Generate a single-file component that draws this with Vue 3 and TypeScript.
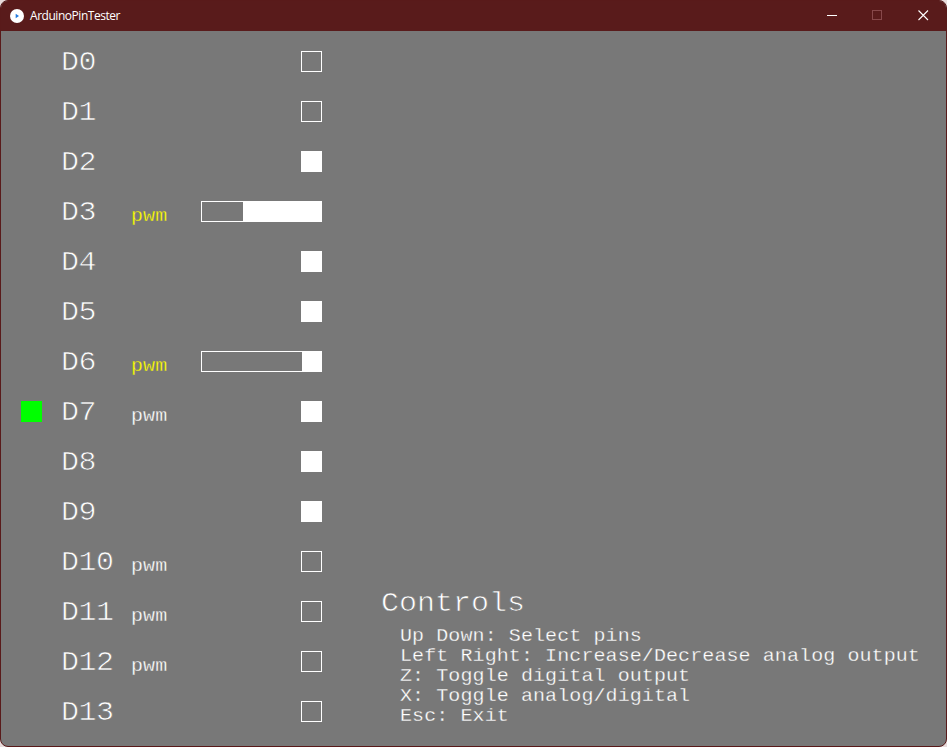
<script setup lang="ts">
interface Pin {
  name: string
  pwm?: boolean
  analog?: number
  high?: boolean
  selected?: boolean
}

const BAR_INNER = 119

const pins: Pin[] = [
  { name: 'D0' },
  { name: 'D1' },
  { name: 'D2', high: true },
  { name: 'D3', pwm: true, analog: 78 },
  { name: 'D4', high: true },
  { name: 'D5', high: true },
  { name: 'D6', pwm: true, analog: 19 },
  { name: 'D7', pwm: true, high: true, selected: true },
  { name: 'D8', high: true },
  { name: 'D9', high: true },
  { name: 'D10', pwm: true },
  { name: 'D11', pwm: true },
  { name: 'D12', pwm: true },
  { name: 'D13' },
]

const controls: string[] = [
  'Up Down: Select pins',
  'Left Right: Increase/Decrease analog output',
  'Z: Toggle digital output',
  'X: Toggle analog/digital',
  'Esc: Exit',
]

const fillWidth = (value: number): string => `${(value / BAR_INNER) * 100}%`
</script>

<template>
  <div class="window">
    <header class="titlebar">
      <svg class="logo" width="14" height="14" viewBox="0 0 14 14">
        <circle cx="7" cy="7" r="7" fill="#fff" />
        <path d="M5.7 4.8 L9 7 L5.7 9.2 Z" fill="#1f7ae0" />
      </svg>
      <span class="title">ArduinoPinTester</span>
      <div class="buttons">
        <svg width="46" height="30" viewBox="0 0 46 30">
          <path d="M18 14.5H28" stroke="#fff" fill="none" />
        </svg>
        <svg width="46" height="30" viewBox="0 0 46 30">
          <rect x="17.5" y="9.5" width="9" height="9" stroke="#87484a" fill="none" />
        </svg>
        <svg width="46" height="30" viewBox="0 0 46 30">
          <path d="M17.5 9.5L27 19M27 9.5L17.5 19" stroke="#fff" stroke-width="1.1" fill="none" />
        </svg>
      </div>
    </header>
    <main class="canvas">
      <div class="pins">
        <div v-for="pin in pins" :key="pin.name" class="pin">
          <span class="cursor" :class="{ active: pin.selected }"></span>
          <span class="name">{{ pin.name }}</span>
          <span class="mode" :class="{ on: pin.analog !== undefined }">{{ pin.pwm ? 'pwm' : '' }}</span>
          <span v-if="pin.analog !== undefined" class="bar">
            <span class="fill" :style="{ width: fillWidth(pin.analog) }"></span>
          </span>
          <span v-else class="box" :class="{ high: pin.high }"></span>
        </div>
      </div>
      <section class="controls">
        <h1>Controls</h1>
        <p v-for="line in controls" :key="line">{{ line }}</p>
      </section>
    </main>
  </div>
</template>

<style>
body {
  background: #e8dcdc;
}
</style>

<style scoped>
.window {
  box-sizing: border-box;
  width: 947px;
  height: 747px;
  border: 1px solid #591a1a;
  border-radius: 8px;
  overflow: hidden;
  background: #787878;
  color: #fff;
  display: flex;
  flex-direction: column;
}
.titlebar {
  box-sizing: border-box;
  flex: none;
  height: 30px;
  background: #591b1b;
  display: flex;
  align-items: center;
  padding-left: 9px;
}
.logo {
  flex: none;
}
.title {
  margin-left: 6px;
  font: 12px/16px "Open Sans", "Noto Sans", sans-serif;
  letter-spacing: -0.46px;
}
.buttons {
  margin-left: auto;
  margin-right: -1px;
  display: flex;
}
.canvas {
  flex: 1;
  display: flex;
  font-family: "Liberation Mono", monospace;
}
.pins {
  width: 321px;
  padding-top: 5px;
}
.pin {
  height: 50px;
  display: grid;
  grid-template-columns: 21px 69px 90px 121px;
  padding-left: 20px;
  align-items: start;
}
.cursor {
  width: 21px;
  height: 21px;
  margin-top: 15px;
}
.cursor.active {
  background: #0f0;
}
/* Short, thin letterforms: glyphs are flattened towards their baseline
   and an outline in the background colour trims their strokes */
.name {
  padding-left: 19px;
  font-size: 30px;
  letter-spacing: -0.5px;
  line-height: 52px;
  height: 50px;
  transform: scaleY(0.92);
  transform-origin: 0 34px;
  -webkit-text-stroke: 0.7px #787878;
}
.mode {
  padding-left: 20px;
  font-size: 20px;
  letter-spacing: 0.07px;
  line-height: 60px;
  height: 50px;
  transform: scaleY(0.88);
  transform-origin: 0 33px;
  -webkit-text-stroke: 0.3px #787878;
}
.mode.on {
  color: #ff0;
}
.box,
.bar {
  box-sizing: border-box;
  height: 21px;
  border: 1px solid #fff;
  margin-top: 15px;
  justify-self: end;
}
.box {
  width: 21px;
}
.box.high {
  background: #fff;
}
.bar {
  width: 121px;
  display: flex;
  justify-content: flex-end;
}
.fill {
  background: #fff;
}
.controls {
  margin-top: 552px;
  padding-left: 59px;
}
h1 {
  margin: 0;
  font-size: 30px;
  font-weight: 400;
  line-height: 40px;
  transform: scaleY(0.92);
  transform-origin: 0 26px;
  -webkit-text-stroke: 0.7px #787878;
}
p {
  margin: 0 0 0 19px;
  font-size: 20px;
  letter-spacing: 0.09px;
  line-height: 20px;
  white-space: pre;
  transform: scaleY(0.88);
  transform-origin: 0 12px;
  -webkit-text-stroke: 0.3px #787878;
}
h1 + p {
  margin-top: 3px;
}
</style>
